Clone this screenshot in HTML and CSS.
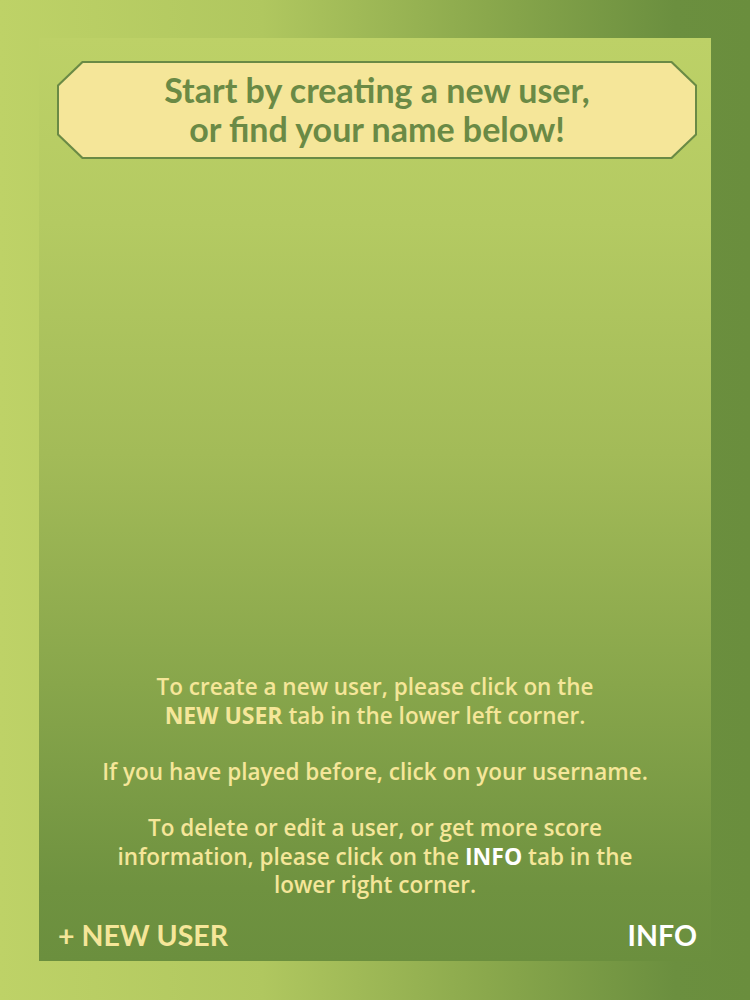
FILE: index.html
```html
<!DOCTYPE html>
<html>
<head>
<meta charset="utf-8">
<link rel="stylesheet" href="styles.css">
</head>
<body>
<div class="frame">
  <div class="panel">
    <div class="banner">
      <div class="banner-inner">
        <p class="banner-text">Start by creating a new user,<br>or find your name below!</p>
      </div>
    </div>
    <div class="spacer"></div>
    <div class="message">
      <p>To create a new user, please click on the<br><strong>NEW USER</strong> tab in the lower left corner.</p>
      <p>If you have played before, click on your username.</p>
      <p>To delete or edit a user, or get more score<br>information, please click on the <strong class="white">INFO</strong> tab in the<br>lower right corner.</p>
    </div>
    <div class="tabs">
      <span class="tab tab-new">+ NEW USER</span>
      <span class="tab tab-info">INFO</span>
    </div>
  </div>
</div>
</body>
</html>
```
FILE: styles.css
```css
html, body {
  margin: 0;
  padding: 0;
}
body {
  width: 750px;
  height: 1000px;
  overflow: hidden;
  background: linear-gradient(to right, #bed267 0%, #b0c75f 35%, #8aa84c 65%, #6b8f3f 90%, #6a8e3d 100%);
}
.frame {
  padding: 38px 39px 39px 39px;
}
.panel {
  width: 672px;
  height: 923px;
  background: linear-gradient(to bottom, #bdd167 0%, #b4ca62 20%, #a3bb58 45%, #88a64b 70%, #6f9240 92%, #6b8f3e 100%);
  display: flex;
  flex-direction: column;
}
.banner {
  margin: 23px 0 0 18px;
  width: 640px;
  height: 98px;
  background: #6a8a45;
  clip-path: polygon(25px 0, 615px 0, 640px 24px, 640px 74px, 615px 98px, 25px 98px, 0 74px, 0 24px);
  padding: 2px;
  box-sizing: border-box;
}
.banner-inner {
  width: 100%;
  height: 100%;
  background: #f5e699;
  clip-path: polygon(24px 0, 612px 0, 636px 23px, 636px 71px, 612px 94px, 24px 94px, 0 71px, 0 23px);
  display: flex;
  align-items: center;
  justify-content: center;
}
.banner-text {
  margin: 0;
  text-align: center;
  font-family: "Lato", "Open Sans", sans-serif;
  font-weight: bold;
  font-size: 34px;
  line-height: 39px;
  color: #6a8a45;
  padding-bottom: 2px;
}
.spacer {
  flex: 1;
}
.message {
  font-family: "Open Sans", sans-serif;
  font-weight: 600;
  font-size: 22.5px;
  line-height: 28px;
  color: #f5e699;
  text-align: center;
}
.message p {
  margin: 0 0 28px 0;
}
.message p:last-child {
  margin-bottom: 0;
}
.message strong {
  font-weight: bold;
  font-size: 23px;
}
.message .white {
  color: #ffffff;
}
.tabs {
  display: flex;
  justify-content: space-between;
  align-items: center;
  padding: 20px 14px 10px 19px;
}
.tab {
  font-family: "Lato", "Open Sans", sans-serif;
  font-weight: bold;
  font-size: 28.5px;
  line-height: 32px;
}
.tab-new {
  color: #f5e699;
}
.tab-info {
  color: #ffffff;
}
```
